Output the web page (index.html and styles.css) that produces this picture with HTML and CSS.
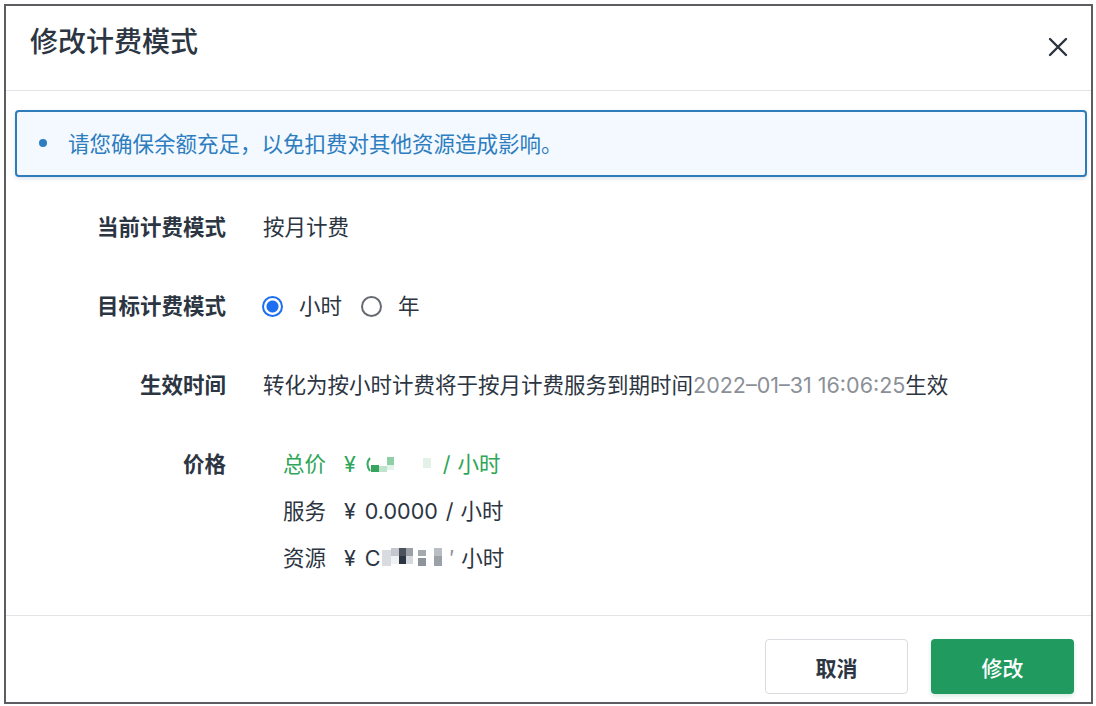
FILE: index.html
```html
<!DOCTYPE html>
<html lang="zh-CN">
<head>
    <meta charset="UTF-8">
    <title>修改计费模式</title>
    <link rel="stylesheet" href="styles.css">
</head>
<body>
    <div class="dialog">
        <div class="dialog-header">
            <h1 class="dialog-title">修改计费模式</h1>
            <button type="button" class="close-btn" aria-label="关闭">
                <svg width="20" height="20" viewBox="0 0 20 20">
                    <path d="M2 2 L18 18 M18 2 L2 18" stroke="#2b3340" stroke-width="2.4" stroke-linecap="round"/>
                </svg>
            </button>
        </div>

        <div class="alert">
            <span class="alert-dot"></span>
            <span>请您确保余额充足，以免扣费对其他资源造成影响。</span>
        </div>

        <div class="form">
            <div class="form-row">
                <div class="form-label">当前计费模式</div>
                <div class="form-value">按月计费</div>
            </div>
            <div class="form-row">
                <div class="form-label">目标计费模式</div>
                <div class="form-value radios">
                    <label class="radio checked"><span class="radio-circle"></span>小时</label>
                    <label class="radio"><span class="radio-circle"></span>年</label>
                </div>
            </div>
            <div class="form-row">
                <div class="form-label">生效时间</div>
                <div class="form-value">转化为按小时计费将于按月计费服务到期时间<span class="muted">2022–01–31 16:06:25</span>生效</div>
            </div>
            <div class="form-row">
                <div class="form-label">价格</div>
                <div class="form-value prices">
                    <div class="price-line total">
                        <span class="price-name">总价</span>
                        <span class="yen">¥</span>
                        <svg class="amount" width="70" height="24" viewBox="0 0 70 24">
                            <path d="M5 6 Q0 12 5 19" stroke="#39a862" stroke-width="2" fill="none"/>
                            <rect x="6" y="13" width="8" height="7" fill="#37a45f"/>
                            <rect x="14" y="14" width="8" height="6" fill="#bfe3cc"/>
                            <rect x="22" y="5" width="7" height="8" fill="#8fcfa5"/>
                            <rect x="22" y="13" width="7" height="5" fill="#e4f3ea"/>
                            <rect x="58" y="6" width="8" height="10" fill="#e3f2e8"/>
                        </svg>
                        <span class="slash">/</span>
                        <span>小时</span>
                    </div>
                    <div class="price-line">
                        <span class="price-name">服务</span>
                        <span class="yen">¥</span>
                        <span class="amount">0.0000</span>
                        <span class="slash">/</span>
                        <span>小时</span>
                    </div>
                    <div class="price-line">
                        <span class="price-name">资源</span>
                        <span class="yen">¥</span>
                        <span class="amount-start">C</span>
                        <svg class="amount" width="60" height="24" viewBox="0 0 60 24">
                            <rect x="0" y="4" width="9" height="16" fill="#d8dbe0"/>
                            <rect x="9" y="2" width="8" height="8" fill="#c4c8ce"/>
                            <rect x="9" y="10" width="8" height="8" fill="#f0f1f3"/>
                            <rect x="17" y="2" width="7" height="8" fill="#4b525c"/>
                            <rect x="17" y="10" width="7" height="8" fill="#2c3542"/>
                            <rect x="24" y="2" width="7" height="8" fill="#9ca1a9"/>
                            <rect x="24" y="10" width="7" height="8" fill="#d5d8dc"/>
                            <rect x="36" y="4" width="8" height="6" fill="#a5aab1"/>
                            <rect x="36" y="12" width="8" height="8" fill="#8e949c"/>
                            <rect x="52" y="2" width="8" height="8" fill="#b9bdc4"/>
                            <rect x="52" y="10" width="8" height="10" fill="#9ca1a9"/>
                        </svg>
                        <span class="slash faded">′</span>
                        <span>小时</span>
                    </div>
                </div>
            </div>
        </div>

        <div class="dialog-footer">
            <button type="button" class="btn btn-default">取消</button>
            <button type="button" class="btn btn-primary">修改</button>
        </div>
    </div>
</body>
</html>
```

FILE: styles.css
```css
body {
    margin: 0;
    padding: 0;
    background-color: #ffffff;
    font-family: Inter, "Noto Sans CJK SC", "Noto Sans", sans-serif;
    color: #2c3542;
}

.dialog {
    box-sizing: border-box;
    width: 1089px;
    height: 700px;
    margin: 4px 0 0 4px;
    border: 2px solid #5b5d61;
    background-color: #fff;
    overflow: hidden;
}

.dialog-header {
    display: flex;
    justify-content: space-between;
    align-items: flex-start;
    height: 85px;
    padding: 16px 23px 0 24px;
    box-sizing: border-box;
    border-bottom: 1px solid #e2e4e8;
}

.dialog-title {
    margin: 0;
    font-size: 28px;
    line-height: 40px;
    font-weight: 500;
    color: #2c3542;
}

.close-btn {
    margin-top: 15px;
    padding: 0;
    border: none;
    background: none;
    cursor: pointer;
    line-height: 0;
}

.alert {
    display: flex;
    align-items: center;
    height: 67px;
    box-sizing: border-box;
    margin: 19px 4px 0 9px;
    padding: 0 0 2px 22px;
    border: 2px solid #2e7cb9;
    border-radius: 4px;
    background-color: #f3f9fe;
    box-shadow: 0 2px 4px rgba(40, 90, 140, 0.15);
    color: #2d7dc0;
    font-size: 21.5px;
}

.alert-dot {
    width: 8px;
    height: 8px;
    margin-right: 21px;
    border-radius: 50%;
    background-color: #2d7dc0;
}

.form {
    padding-top: 34px;
    height: 439px;
    box-sizing: border-box;
    border-bottom: 1px solid #e2e4e8;
}

.form-row {
    display: flex;
    align-items: flex-start;
    margin-bottom: 47px;
    font-size: 21.5px;
    line-height: 32px;
}

.form-label {
    width: 220px;
    flex-shrink: 0;
    text-align: right;
    font-weight: 700;
    color: #2c3542;
}

.form-value {
    margin-left: 37px;
    color: #2c3542;
}

.muted {
    color: #8b9098;
}

.radios {
    display: flex;
    align-items: center;
}

.radio {
    display: flex;
    align-items: center;
    margin-right: 20px;
}

.radio-circle {
    width: 21px;
    height: 21px;
    margin: 0 16px 0 -1px;
    border: 2px solid #666a70;
    border-radius: 50%;
    box-sizing: border-box;
}

.radio.checked .radio-circle {
    border-color: #1b6ff0;
    background: radial-gradient(circle, #1b6ff0 0 5.5px, #fff 6.5px);
}

.prices {
    margin-left: 57px;
}

.price-line {
    display: flex;
    align-items: center;
    height: 32px;
    margin-bottom: 15px;
}

.price-name {
    margin-right: 18px;
}

.yen {
    margin-right: 9px;
}

.amount {
    margin-right: 8px;
}

.amount-start {
    margin-right: 1px;
}

.slash {
    margin-right: 7px;
}

.slash.faded {
    color: #8b9098;
}

.price-line.total {
    color: #2fa558;
}

.dialog-footer {
    display: flex;
    justify-content: flex-end;
    gap: 23px;
    padding: 23px 17px 0 0;
}

.btn {
    width: 143px;
    height: 55px;
    border-radius: 4px;
    font-family: inherit;
    font-size: 21px;
    cursor: pointer;
}

.btn-default {
    background-color: #fff;
    border: 1px solid #d9dce0;
    color: #2c3542;
    font-weight: 700;
}

.btn-primary {
    background-color: #219a60;
    border: none;
    color: #fff;
    font-weight: 500;
    box-shadow: 0 2px 4px rgba(33, 154, 96, 0.2);
}
```
